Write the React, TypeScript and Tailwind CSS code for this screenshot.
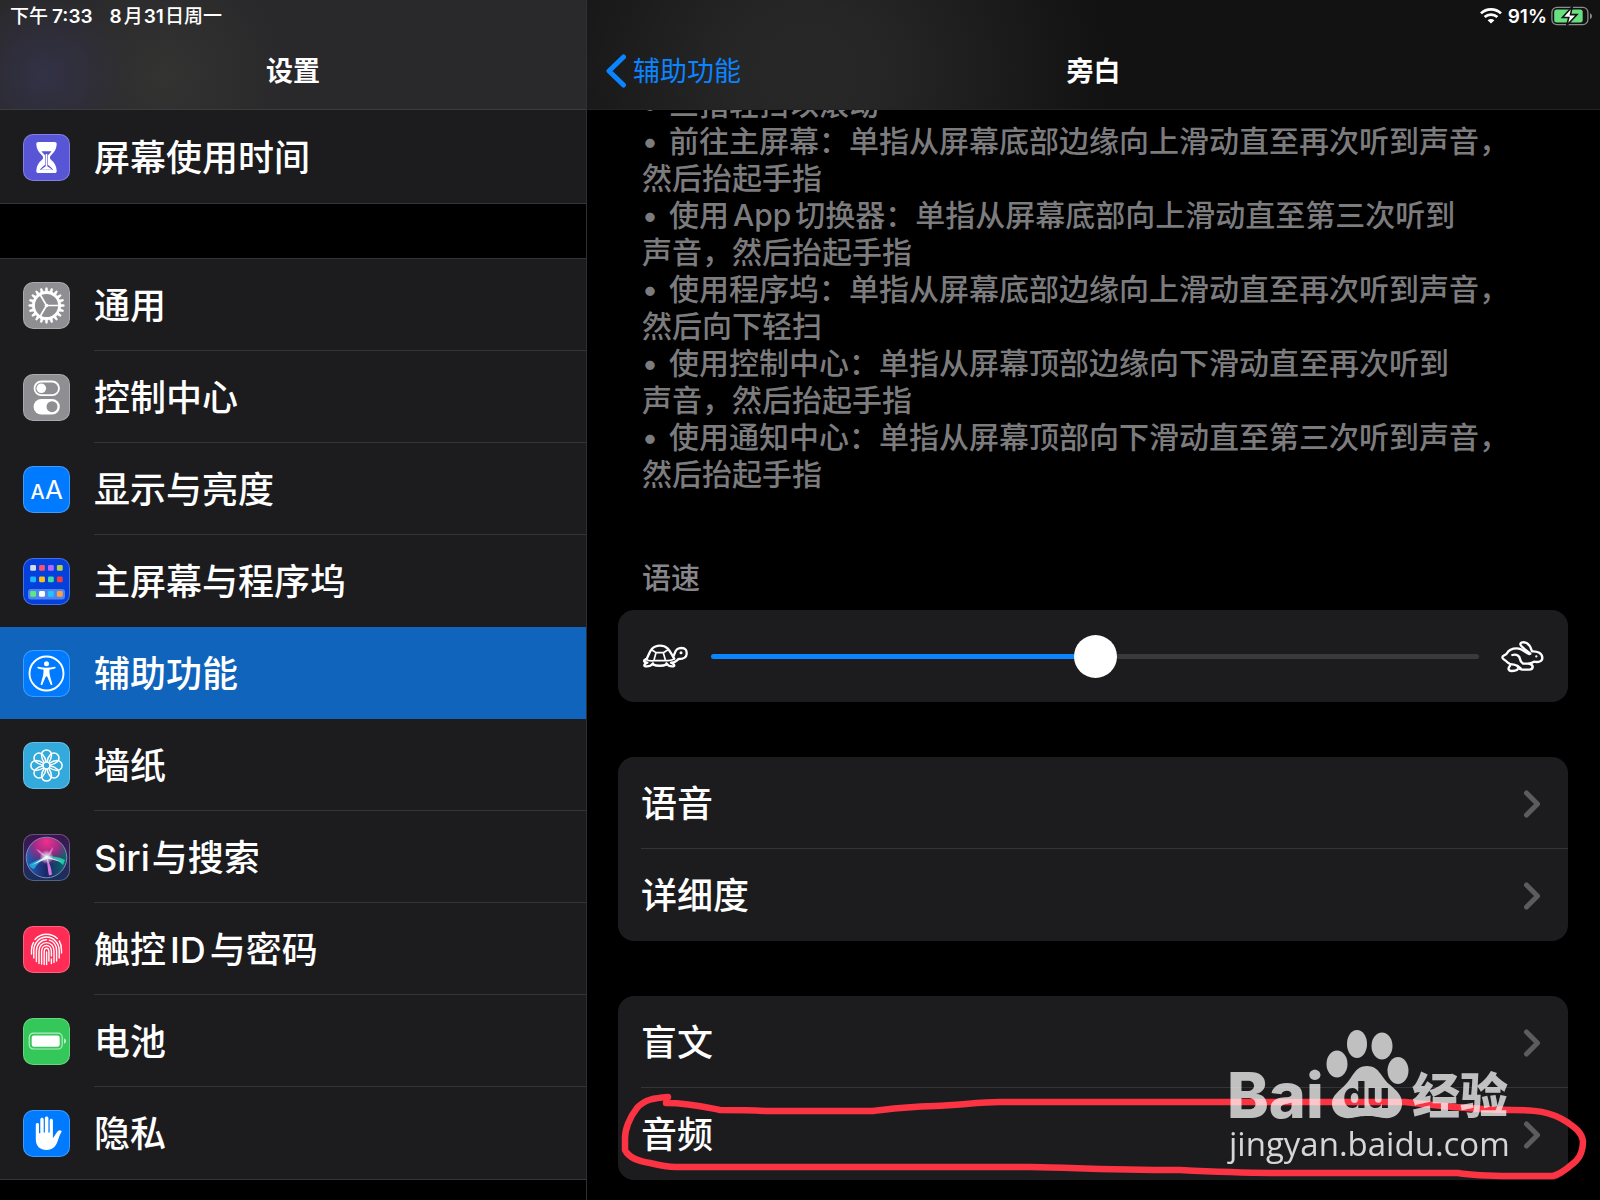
import React from "react";

const TILE = "h-[47px] w-[47px] shrink-0 rounded-[10px] border border-white/25 bg-origin-border";

function Tile({ className, children }: { className: string; children: React.ReactNode }) {
  return (
    <span className={`${TILE} ${className}`} aria-hidden="true">
      <svg viewBox="0 0 47 47" className="-m-px h-[47px] w-[47px]" fill="none">
        {children}
      </svg>
    </span>
  );
}

function HourglassIcon() {
  return (
    <Tile className="bg-[#5856d6]">
      <path
        fill="#fff"
        d="M15.5 8h16c1.5 0 2.3.8 2.2 2.3-.3 5-2.4 8-5.4 10.600-1 .9-1.300 1.600-1.300 2.600s.3 1.700 1.300 2.600c3 2.600 5.100 5.600 5.400 10.600.1 1.500-.7 2.300-2.200 2.300h-16c-1.500 0-2.300-.8-2.200-2.300.3-5 2.400-8 5.400-10.600 1-.9 1.300-1.600 1.300-2.600s-.3-1.700-1.300-2.600c-3-2.600-5.100-5.600-5.400-10.600C13.200 8.800 14 8 15.500 8z"
      />
      <path d="M18.500 17.200h10c-1 1.800-2.600 3-3.700 4.300v9.200c1.800 1.500 4 2.500 5.200 5.300h-13c1.200-2.800 3.400-3.800 5.200-5.300v-9.200c-1.100-1.300-2.700-2.500-3.700-4.300z" fill="#5856d6" />
      <path d="M23.500 20v12.500l3.500 2.500h-7l3.500-2.500" fill="#fff" stroke="#fff" strokeWidth="1.500" />
    </Tile>
  );
}

function GearIcon() {
  const teeth = Array.from({ length: 20 }, (_, i) => i * 18);
  return (
    <Tile className="bg-[#8e8e93]">
      <circle cx="23.5" cy="23.5" r="13" stroke="#fff" strokeWidth="2.800" />
      {teeth.map((a) => (
        <path key={a} d="M22.100 10.500L22.800 5.800h1.400L24.900 10.500z" fill="#fff" stroke="#fff" strokeWidth=".6" transform={`rotate(${a} 23.5 23.5)`} />
      ))}
      <path d="M23.500 23.500H37M23.500 23.500L16.800 12M23.500 23.500L16.800 35" stroke="#fff" strokeWidth="1.700" />
      <circle cx="23.500" cy="23.500" r="1.800" fill="#fff" />
    </Tile>
  );
}

function ControlIcon() {
  return (
    <Tile className="bg-[#8e8e93]">
      <rect x="11.500" y="7.500" width="24.500" height="13.600" rx="6.800" stroke="#fff" strokeWidth="1.800" />
      <circle cx="18.300" cy="14.300" r="4.800" fill="#fff" />
      <rect x="10.600" y="25" width="26.200" height="15.400" rx="7.700" fill="#fff" />
      <circle cx="29" cy="32.700" r="5.500" fill="#8e8e93" />
    </Tile>
  );
}

function DisplayIcon() {
  return (
    <Tile className="bg-[#007aff]">
      <text x="7.500" y="33" fontSize="20" fill="#fff" fontFamily="Inter, sans-serif" fontWeight="500">A</text>
      <text x="22" y="33" fontSize="26" fill="#fff" fontFamily="Inter, sans-serif" fontWeight="400">A</text>
    </Tile>
  );
}

function HomeScreenIcon() {
  const rows = [
    { y: 7, colors: ["#d3dbe8", "#ff4f6d", "#b368ff", "#b4d343"] },
    { y: 18.500, colors: ["#1cb4fb", "#fdbf18", "#3ed9a4", "#f93a3a"] },
    { y: 33, colors: ["#59ea7c", "#ffffff", "#23c3ff", "#ffa040"] },
  ];
  return (
    <Tile className="bg-[#0340dc]">
      <rect x="5" y="31" width="37" height="10.500" rx="3" fill="#4f83ee" />
      {rows.map((r) =>
        r.colors.map((c, i) => <rect key={c} x={7.200 + i * 8.900} y={r.y} width="5.800" height="5.800" rx="1.300" fill={c} />)
      )}
    </Tile>
  );
}

function AccessibilityIcon() {
  return (
    <Tile className="bg-[#007aff]">
      <circle cx="23.500" cy="23.500" r="17" stroke="#fff" strokeWidth="1.900" />
      <circle cx="23.500" cy="13.800" r="2.500" fill="#fff" />
      <path
        fill="#fff"
        d="M15.300 16.800c2.700.5 5.300.9 8.200.9s5.500-.4 8.200-.9c1.100-.2 1.400 1.300.3 1.600-1.900.5-3.800.9-5.400 1.200-.3 2.300 0 4.600.6 6.900l2.100 7.400c.3 1.100-1.200 1.600-1.700.5l-3.300-7.600c-.3-.8-1.300-.8-1.600 0l-3.300 7.600c-.5 1.100-2 .6-1.700-.5l2.100-7.400c.6-2.300.9-4.600.6-6.900-1.600-.3-3.500-.7-5.400-1.200-1.100-.3-.8-1.800.3-1.600z"
      />
    </Tile>
  );
}

function WallpaperIcon() {
  return (
    <Tile className="bg-[#34aadc]">
      {[0, 45, 90, 135, 180, 225, 270, 315].map((a) => (
        <path
          key={a}
          transform={`rotate(${a} 23.5 23.5)`}
          d="M21.500 21C19 17.500 18.500 15 18.500 12.900a5 5 0 0 1 10 0C28.500 15 28 17.500 25.500 21"
          stroke="#fff"
          strokeWidth="1.500"
        />
      ))}
      <circle cx="23.500" cy="23.500" r="3.400" stroke="#fff" strokeWidth="1.300" />
    </Tile>
  );
}

function SiriIcon() {
  return (
    <Tile className="overflow-hidden bg-linear-to-b from-[#3a1450] to-[#15305c]">
      <defs>
        <radialGradient id="siriPink" cx=".5" cy=".1" r=".6">
          <stop offset="0" stopColor="#ee308c" />
          <stop offset=".5" stopColor="#a82a86" />
          <stop offset="1" stopColor="#a02a86" stopOpacity="0" />
        </radialGradient>
        <radialGradient id="siriGlow">
          <stop offset="0" stopColor="#fff" />
          <stop offset=".35" stopColor="#e9f6ff" stopOpacity=".7" />
          <stop offset="1" stopColor="#fff" stopOpacity="0" />
        </radialGradient>
        <linearGradient id="siriOrb" x1="0" x2="1">
          <stop offset="0" stopColor="#2462b8" />
          <stop offset=".5" stopColor="#1b2668" />
          <stop offset="1" stopColor="#0b6a6c" />
        </linearGradient>
      </defs>
      <circle cx="23.500" cy="23.500" r="20" fill="url(#siriOrb)" />
      <circle cx="23.500" cy="23.500" r="20" fill="url(#siriPink)" />
      <path d="M24 22C19 24 11 27 6 31c2 3 4 4 5 4 3-5 8-9 12-12z" fill="#25b5e8" opacity=".8" />
      <path d="M24 23c5 0 12 4 16 8l2-5c-6-3-12-4-18-4z" fill="#28d7b4" opacity=".85" />
      <path d="M23.500 23c1 6 1 12 2.500 18.500l3-1c-.5-6-2.500-12-5.500-17.500z" fill="#e07be6" opacity=".95" />
      <path d="M22 22c-2-3-5-6-9-7 3 4 6 7 9 7zM25 22c1-4 3-7 5-9 0 4-2 7-5 9z" fill="#ef9be0" opacity=".65" />
      <path d="M9 31L23.500 22 39 28 24.500 24.500z" fill="#fff" opacity=".85" />
      <circle cx="23.500" cy="23" r="7" fill="url(#siriGlow)" />
      <circle cx="23.500" cy="23.500" r="20.300" stroke="#a7a6d1" strokeWidth="1" opacity=".75" />
    </Tile>
  );
}

function TouchIdIcon() {
  return (
    <Tile className="bg-[#ff2d55]">
      <g stroke="#fff" strokeWidth="1.400" strokeLinecap="round">
        <path d="M12 13.500C15 10 19 8.200 23.500 8.200c4 0 8 1.500 10.800 4.300" />
        <path d="M8.500 28v-4c0-3 .8-5.500 2-7.600" />
        <path d="M36.200 15c1.600 2.500 2.300 5.500 2.300 9v3" />
        <path d="M10.800 32v-7.500c0-7.500 5.600-13.500 12.700-13.500S36 17 36.200 24.500V32" />
        <path d="M13.400 35.500V25c0-6.500 4.300-11.200 10.100-11.200" />
        <path d="M26.300 14.200c4.600 1.300 7.300 5.300 7.300 10.800v10" />
        <path d="M16 37.500V25c0-5 3.100-8.400 7.500-8.400S31 20 31 25v11.500" />
        <path d="M18.600 38V25.500c0-3.500 2-6 4.900-6s4.900 2.500 4.900 6V30" />
        <path d="M28.400 33v4.500" />
        <path d="M21.200 38.500V26c0-2.300.9-3.700 2.300-3.700s2.400 1.400 2.400 3.700v9" />
        <path d="M23.600 26v12.500" />
      </g>
    </Tile>
  );
}

function BatteryIcon() {
  return (
    <Tile className="bg-[#34c759]">
      <rect x="6.200" y="15.200" width="33" height="15.800" rx="4.200" stroke="#fff" strokeOpacity=".65" strokeWidth="1.200" />
      <rect x="8.700" y="17.500" width="28" height="11.200" rx="2.200" fill="#fff" />
      <path d="M41 20.500c2.700.6 2.700 4.600 0 5.200z" fill="#fff" fillOpacity=".7" />
    </Tile>
  );
}

function PrivacyIcon() {
  return (
    <Tile className="bg-[#007aff]">
      <path
        fill="#fff"
        d="M12.800 14.600c0-2.200 3.200-2.200 3.200 0v8.600h1.300V9.500c0-2.300 3.400-2.300 3.400 0v13h1.200V8.200c0-2.400 3.500-2.400 3.500 0v14.300h1.300V10.300c0-2.200 3.200-2.200 3.200 0v18l4-6c1.300-2 2.800-2.700 4.400-1.600.5.400.5.900.2 1.400-1.700 2.600-2.700 6-3.800 9-1.900 5.600-5 8.900-11 8.900-7 0-10.900-4-10.900-11z"
      />
    </Tile>
  );
}

function TurtleIcon() {
  return (
    <svg viewBox="68 278 141 78" className="h-[26px] w-[47px] shrink-0" fill="none" stroke="#fff" strokeWidth="7" strokeLinecap="round" strokeLinejoin="round" aria-hidden="true">
      <path d="M81 327C90 315 91 286 122 286c27 0 31 22 43 39" />
      <path d="M98 299l12 8h22l13-8M110 307l-6 22M132 307l6 22M81 327c6 5 14 5 23 4h34c10 0 18 0 26-5" strokeWidth="5" />
      <path d="M161 319c7-7 4-26 25-26 13 0 17 7 16 18-1 13-12 15-24 15-7 5-10 11-20 11" />
      <path d="M79 327c-8 4-4 8 1 9M100 342c12 5 30 5 43 0" />
      <path d="M101 339c-6 8-14 10-23 9-6-1-3-8 6-11M141 339c6 8 14 10 21 9 6-1 2-8-7-11" />
      <circle cx="185" cy="307" r="2" strokeWidth="5" />
    </svg>
  );
}

function RabbitIcon() {
  return (
    <svg viewBox="300 115 132 99" className="h-[33px] w-[44px] shrink-0" fill="none" stroke="#fff" strokeWidth="7" strokeLinecap="round" strokeLinejoin="round" aria-hidden="true">
      <path d="M388 157c-12-3-20-17-37-17-15 0-25 4-31 16-3 5-13 4-13 11 0 8 10 7 14 14 6 6 12 8 21 8 8 1 14 5 20 11" />
      <path d="M391 156c-9-8-30-21-30-28 0-7 12-8 20-3 10 6 12 16 15 24 17-1 31 6 31 20 0 10-12 14-25 11-4 3-9 5-15 6 8 2 12 5 11 11-1 5-5 7-10 7h-22c-8 0-10-6-14-11" />
      <path d="M337 160c14-4 22 4 23 12 1 8 5 11 9 14h17M330 192c-7 8-6 16 5 16 8 0 14 0 18-5" />
      <circle cx="409" cy="164" r="1.500" strokeWidth="4" />
    </svg>
  );
}

function WifiIcon() {
  return (
    <svg viewBox="0 0 22 16" className="h-4 w-[22px]" fill="none" stroke="#fff" aria-hidden="true">
      <path d="M1 5.400C6.500.1 15.500.1 21 5.400" strokeWidth="2.700" />
      <path d="M4.600 9.100c3.600-3.400 9.200-3.400 12.800 0" strokeWidth="2.700" />
      <path d="M11 15.600L7.600 12.200c1.900-1.700 4.900-1.700 6.800 0z" fill="#fff" stroke="none" />
    </svg>
  );
}

function ChargeIcon() {
  return (
    <svg viewBox="0 0 42 20" className="h-5 w-[42px]" fill="none" aria-hidden="true">
      <rect x=".9" y="1.400" width="36" height="17.200" rx="5" stroke="#8b8b8b" strokeWidth="1.300" />
      <rect x="3.200" y="3.600" width="28.500" height="12.800" rx="2.500" fill="#67e07f" />
      <path d="M39 7.300c2.600.9 2.600 4.900 0 5.800z" fill="#8b8b8b" />
      <path d="M21.200.8L11.500 11.500h6.300L15.700 19.500 26 8.600h-6.500z" fill="#fff" stroke="#131313" strokeWidth="1.600" />
    </svg>
  );
}

function Chevron() {
  return (
    <svg viewBox="0 0 18 28" className="h-7 w-[18px] shrink-0" fill="none" stroke="#5b5b60" strokeWidth="5" strokeLinecap="round" strokeLinejoin="round" aria-hidden="true">
      <path d="M3.500 3L14.500 14 3.500 25" />
    </svg>
  );
}

const MENU = [
  { icon: <GearIcon />, label: "通用" },
  { icon: <ControlIcon />, label: "控制中心" },
  { icon: <DisplayIcon />, label: "显示与亮度" },
  { icon: <HomeScreenIcon />, label: "主屏幕与程序坞" },
  { icon: <AccessibilityIcon />, label: "辅助功能", active: true },
  { icon: <WallpaperIcon />, label: "墙纸" },
  { icon: <SiriIcon />, label: <><span className="mr-0.5">Siri</span>与搜索</> },
  { icon: <TouchIdIcon />, label: <>触控<span className="mx-1">ID</span>与密码</> },
  { icon: <BatteryIcon />, label: "电池" },
  { icon: <PrivacyIcon />, label: "隐私" },
];

function MenuRow({ icon, label, active, line }: { icon: React.ReactNode; label: React.ReactNode; active?: boolean; line?: boolean }) {
  return (
    <button
      type="button"
      aria-current={active ? "page" : undefined}
      className={`flex h-[92px] w-full items-stretch gap-6 pl-[23px] text-left text-[36px] leading-none ${active ? "bg-[#1064bb]" : ""}`}
    >
      <span className="flex items-center">{icon}</span>
      <span className={`flex flex-1 items-center border-b pt-0.5 ${line ? "border-[#353538]" : "border-transparent"}`}>
        <span>{label}</span>
      </span>
    </button>
  );
}

function DetailRow({ label, line }: { label: string; line?: boolean }) {
  return (
    <button type="button" className="flex h-[92px] w-full pl-[23px] text-left text-[36px] leading-none">
      <span className={`flex flex-1 items-center justify-between border-b pr-[27px] pt-0.5 ${line ? "border-[#353538]" : "border-transparent"}`}>
        {label}
        <Chevron />
      </span>
    </button>
  );
}

function Watermark() {
  return (
    <svg viewBox="1220 1020 300 150" className="pointer-events-none absolute right-12 top-6 h-[150px] w-[300px]" fill="#fff" role="img" aria-label="Baidu 经验">
      <defs>
        <mask id="pawMask">
          <rect x="1320" y="1020" width="90" height="110" fill="#fff" />
          <text x="1343" y="1108" fontSize="37" fontWeight="800" fontFamily="Inter, sans-serif" fill="#000">du</text>
        </mask>
      </defs>
      <g opacity=".72">
        <text x="1227" y="1118" fontSize="63" fontWeight="800" fontFamily="Inter, sans-serif">Bai</text>
        <g mask="url(#pawMask)">
          <ellipse cx="1337" cy="1064" rx="10.500" ry="13.500" />
          <ellipse cx="1357" cy="1044" rx="10" ry="14" />
          <ellipse cx="1382" cy="1046" rx="10.500" ry="13.500" />
          <ellipse cx="1398" cy="1070.500" rx="10.500" ry="13.500" />
          <path d="M1367 1066c12 0 14 11 22 18 8 7 14 12 13 21-1 9-9 14-18 13-7-1-10-2-17-2s-10 1-16 2c-10 1-18-4-19-13-1-10 8-14 14-21 7-7 9-18 21-18z" />
        </g>
        <text x="1412" y="1113" fontSize="48" fontWeight="900" fontFamily="'Noto Sans CJK SC', sans-serif">经验</text>
      </g>
      <text x="1229" y="1156" fontSize="33" fontWeight="500" opacity=".82" fontFamily="'Open Sans', sans-serif">jingyan.baidu.com</text>
    </svg>
  );
}

function Marker() {
  return (
    <svg viewBox="618 996 982 204" className="pointer-events-none absolute left-0 top-0 h-[204px] w-[982px] max-w-none" fill="none" stroke="#fb3342" strokeWidth="6.500" strokeLinecap="round" strokeLinejoin="round" aria-hidden="true">
      <path d="M668 1097C655 1098 645 1099 637 1108C629 1118 625 1130 625 1138V1150C629 1158 638 1161 650 1163C662 1166 668 1167 676 1167H1030C1060 1167 1100 1170 1180 1170C1220 1172 1250 1173 1280 1173H1458C1470 1175 1485 1176 1510 1176H1553C1562 1174 1570 1166 1576 1161C1582 1155 1583 1147 1583 1141C1582 1132 1574 1127 1567 1122C1550 1111 1535 1110 1512 1110C1480 1110 1440 1106 1405 1102H1000C980 1102 960 1105 935 1106C900 1107 890 1109 873 1111H765C750 1110 740 1110 720 1110C705 1107 690 1103 666 1103" />
    </svg>
  );
}

const TIPS = [
  [<>前往主屏幕：单指从屏幕底部边缘向上滑动直至再次听到声音，</>, "然后抬起手指"],
  [<>使用<span className="mx-1">App</span>切换器：单指从屏幕底部向上滑动直至第三次听到</>, "声音，然后抬起手指"],
  [<>使用程序坞：单指从屏幕底部边缘向上滑动直至再次听到声音，</>, "然后向下轻扫"],
  [<>使用控制中心：单指从屏幕顶部边缘向下滑动直至再次听到</>, "声音，然后抬起手指"],
  [<>使用通知中心：单指从屏幕顶部向下滑动直至第三次听到声音，</>, "然后抬起手指"],
];

function Bullet() {
  return <span className="inline-block w-[27px]">•</span>;
}

export default function App() {
  return (
    <div
      lang="zh-CN"
      className="grid h-screen grid-cols-[587fr_1013fr] overflow-hidden bg-black font-[Inter,'Noto_Sans_CJK_SC',sans-serif] font-medium text-white"
    >
      <aside className="border-r border-[#303033]">
        <header className="flex h-[110px] flex-col border-b border-[#3c3c3f] bg-[#29292b] bg-[radial-gradient(circle_at_45px_75px,#333146_0,transparent_85px),radial-gradient(circle_at_165px_75px,#333332_0,transparent_120px)]">
          <div className="flex h-8 items-center gap-[17px] pl-2.5 text-[19px] leading-none">
            <span>下午<span className="ml-1 font-semibold">7:33</span></span>
            <span><span className="mr-0.5 font-semibold">8</span>月<span className="mx-px font-semibold">31</span>日周一</span>
          </div>
          <h1 className="flex h-[77px] items-center justify-center pt-0.5 text-[27px] font-semibold leading-none">设置</h1>
        </header>
        <nav>
          <div className="border-b border-[#353538] bg-[#1c1c1e] pt-px">
            <MenuRow icon={<HourglassIcon />} label="屏幕使用时间" />
          </div>
          <div className="mt-[54px] border-y border-[#353538] bg-[#1c1c1e]">
            {MENU.map((m, i) => (
              <MenuRow key={i} {...m} line={i !== 3 && i !== 4 && i !== MENU.length - 1} />
            ))}
          </div>
        </nav>
      </aside>

      <main className="min-w-0">
        <header className="flex h-[110px] flex-col border-b border-[#232324] bg-[#121212] bg-[radial-gradient(ellipse_300px_260px_at_220px_70px,#272727_0,#262626_25%,transparent_100%)]">
          <div className="flex h-8 items-center justify-end pr-[7px] text-[19px] font-semibold leading-none">
            <WifiIcon />
            <span className="ml-1.5 mr-1">91%</span>
            <ChargeIcon />
          </div>
          <div className="grid h-[77px] grid-cols-[1fr_auto_1fr] items-center text-[27px] leading-none">
            <button type="button" className="flex items-center gap-1.5 justify-self-start pl-[18px] font-normal text-[#0a84ff]">
              <svg viewBox="0 0 22 34" className="h-[34px] w-[22px]" fill="none" stroke="currentColor" strokeWidth="5" strokeLinecap="round" strokeLinejoin="round" aria-hidden="true">
                <path d="M18.500 3L4 17l14.500 14" />
              </svg>
              <span className="pt-0.5">辅助功能</span>
            </button>
            <h2 className="pt-0.5 font-semibold">旁白</h2>
          </div>
        </header>

        <div className="overflow-hidden pl-[31px] pr-8">
          <ul className="-mt-6 pl-6 text-[30px] font-medium leading-[37px] text-[#7c7c7e]">
            <li><Bullet />三指轻扫以滚动</li>
            {TIPS.map(([first, rest], i) => (
              <li key={i} className="whitespace-nowrap">
                <Bullet />{first}
                <br />
                {rest}
              </li>
            ))}
          </ul>

          <label htmlFor="rate" className="mt-[63px] block pl-6 text-[29px] font-medium leading-[46px] text-[#87878b]">语速</label>
          <div className="mt-2 flex h-[92px] items-center rounded-2xl bg-[#1c1c1e] pl-6 pr-6">
            <TurtleIcon />
            <input
              id="rate"
              type="range"
              min={0}
              max={100}
              defaultValue={50}
              className="ml-[22px] mr-[21px] h-[43px] min-w-0 flex-1 appearance-none bg-transparent [&::-webkit-slider-runnable-track]:h-[5px] [&::-webkit-slider-runnable-track]:rounded-full [&::-webkit-slider-runnable-track]:bg-[linear-gradient(to_right,#0a84ff_50%,#3a3a3c_50%)] [&::-webkit-slider-thumb]:-mt-[19px] [&::-webkit-slider-thumb]:h-[43px] [&::-webkit-slider-thumb]:w-[43px] [&::-webkit-slider-thumb]:appearance-none [&::-webkit-slider-thumb]:rounded-full [&::-webkit-slider-thumb]:bg-white"
            />
            <RabbitIcon />
          </div>

          <section className="mt-[55px] rounded-2xl bg-[#1c1c1e]">
            <DetailRow label="语音" line />
            <DetailRow label="详细度" />
          </section>
        </div>

        <div className="pl-[31px] pr-8 pt-[55px]">
          <section className="relative rounded-2xl bg-[#1c1c1e]">
            <DetailRow label="盲文" line />
            <DetailRow label="音频" />
            <Marker />
            <Watermark />
          </section>
        </div>
      </main>
    </div>
  );
}
